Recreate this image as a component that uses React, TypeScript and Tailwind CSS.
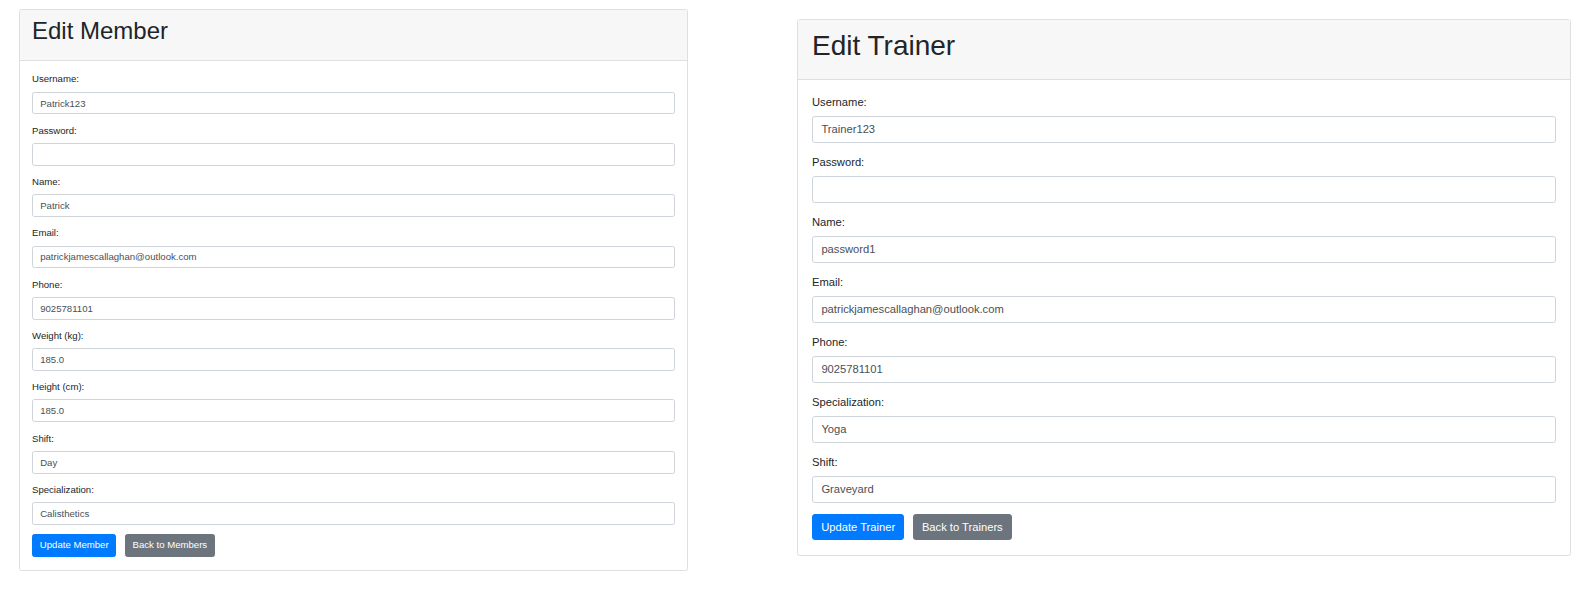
import React from "react";

interface Field {
  label: string;
  value: string;
}

interface Sizing {
  card: string;
  header: string;
  title: string;
  body: string;
  group: string;
  label: string;
  input: string;
  buttons: string;
  button: string;
}

// left screenshot is bootstrap at ~0.6 scale, right one at ~0.7
const small: Sizing = {
  card: "ml-[19px] mt-[9px] w-[669px] rounded-[2.4px]",
  header: "px-[12px] pt-[7.2px] pb-[14px]",
  title: "text-[24px] leading-[28.8px]",
  body: "px-[12px] pt-[11.5px] pb-[13px]",
  group: "mb-[9.3px]",
  label: "text-[9.6px] leading-[14.4px] mb-[4.8px]",
  input: "h-[22.8px] px-[7.2px] text-[9.6px] rounded-[2.4px]",
  buttons: "gap-[8.3px]",
  button: "h-[22.8px] px-[6.8px] text-[9.6px] rounded-[2.4px]",
};

const large: Sizing = {
  card: "ml-[109px] mt-[19px] w-[774px] rounded-[2.8px]",
  header: "px-[14px] pt-[8.5px] pb-[17px]",
  title: "text-[28px] leading-[33.6px]",
  body: "px-[14px] pt-[13.7px] pb-[14.7px]",
  group: "mb-[11px]",
  label: "text-[11.2px] leading-[16.8px] mb-[5.6px]",
  input: "h-[26.6px] px-[8.4px] text-[11.2px] rounded-[2.8px]",
  buttons: "gap-[8.3px]",
  button: "h-[26.6px] px-[8.2px] text-[11.2px] rounded-[2.8px]",
};

const memberFields: Field[] = [
  { label: "Username:", value: "Patrick123" },
  { label: "Password:", value: "" },
  { label: "Name:", value: "Patrick" },
  { label: "Email:", value: "patrickjamescallaghan@outlook.com" },
  { label: "Phone:", value: "9025781101" },
  { label: "Weight (kg):", value: "185.0" },
  { label: "Height (cm):", value: "185.0" },
  { label: "Shift:", value: "Day" },
  { label: "Specialization:", value: "Calisthetics" },
];

const trainerFields: Field[] = [
  { label: "Username:", value: "Trainer123" },
  { label: "Password:", value: "" },
  { label: "Name:", value: "password1" },
  { label: "Email:", value: "patrickjamescallaghan@outlook.com" },
  { label: "Phone:", value: "9025781101" },
  { label: "Specialization:", value: "Yoga" },
  { label: "Shift:", value: "Graveyard" },
];

function EditCard({
  title,
  fields,
  submitLabel,
  backLabel,
  s,
}: {
  title: string;
  fields: Field[];
  submitLabel: string;
  backLabel: string;
  s: Sizing;
}) {
  return (
    <div className={`shrink-0 border border-[#dfdfdf] bg-white ${s.card}`}>
      <div className={`border-b border-[#dfdfdf] bg-[#f7f7f7] ${s.header}`}>
        <h1 className={`font-normal text-[#212529] ${s.title}`}>{title}</h1>
      </div>
      <form className={s.body} onSubmit={(e) => e.preventDefault()}>
        {fields.map((f) => (
          <div key={f.label} className={s.group}>
            <label className={`block text-[#212529] ${s.label}`}>{f.label}</label>
            <input
              type={f.label === "Password:" ? "password" : "text"}
              defaultValue={f.value}
              className={`block w-full border border-[#ced4da] bg-white text-[#495057] outline-none ${s.input}`}
            />
          </div>
        ))}
        <div className={`flex ${s.buttons}`}>
          <button type="submit" className={`border border-[#007bff] bg-[#007bff] text-white ${s.button}`}>
            {submitLabel}
          </button>
          <button type="button" className={`border border-[#6c757d] bg-[#6c757d] text-white ${s.button}`}>
            {backLabel}
          </button>
        </div>
      </form>
    </div>
  );
}

export default function App() {
  return (
    <div className="flex min-h-[597px] items-start bg-white font-['Liberation_Sans',Arial,sans-serif]">
      <EditCard title="Edit Member" fields={memberFields} submitLabel="Update Member" backLabel="Back to Members" s={small} />
      <EditCard title="Edit Trainer" fields={trainerFields} submitLabel="Update Trainer" backLabel="Back to Trainers" s={large} />
    </div>
  );
}
